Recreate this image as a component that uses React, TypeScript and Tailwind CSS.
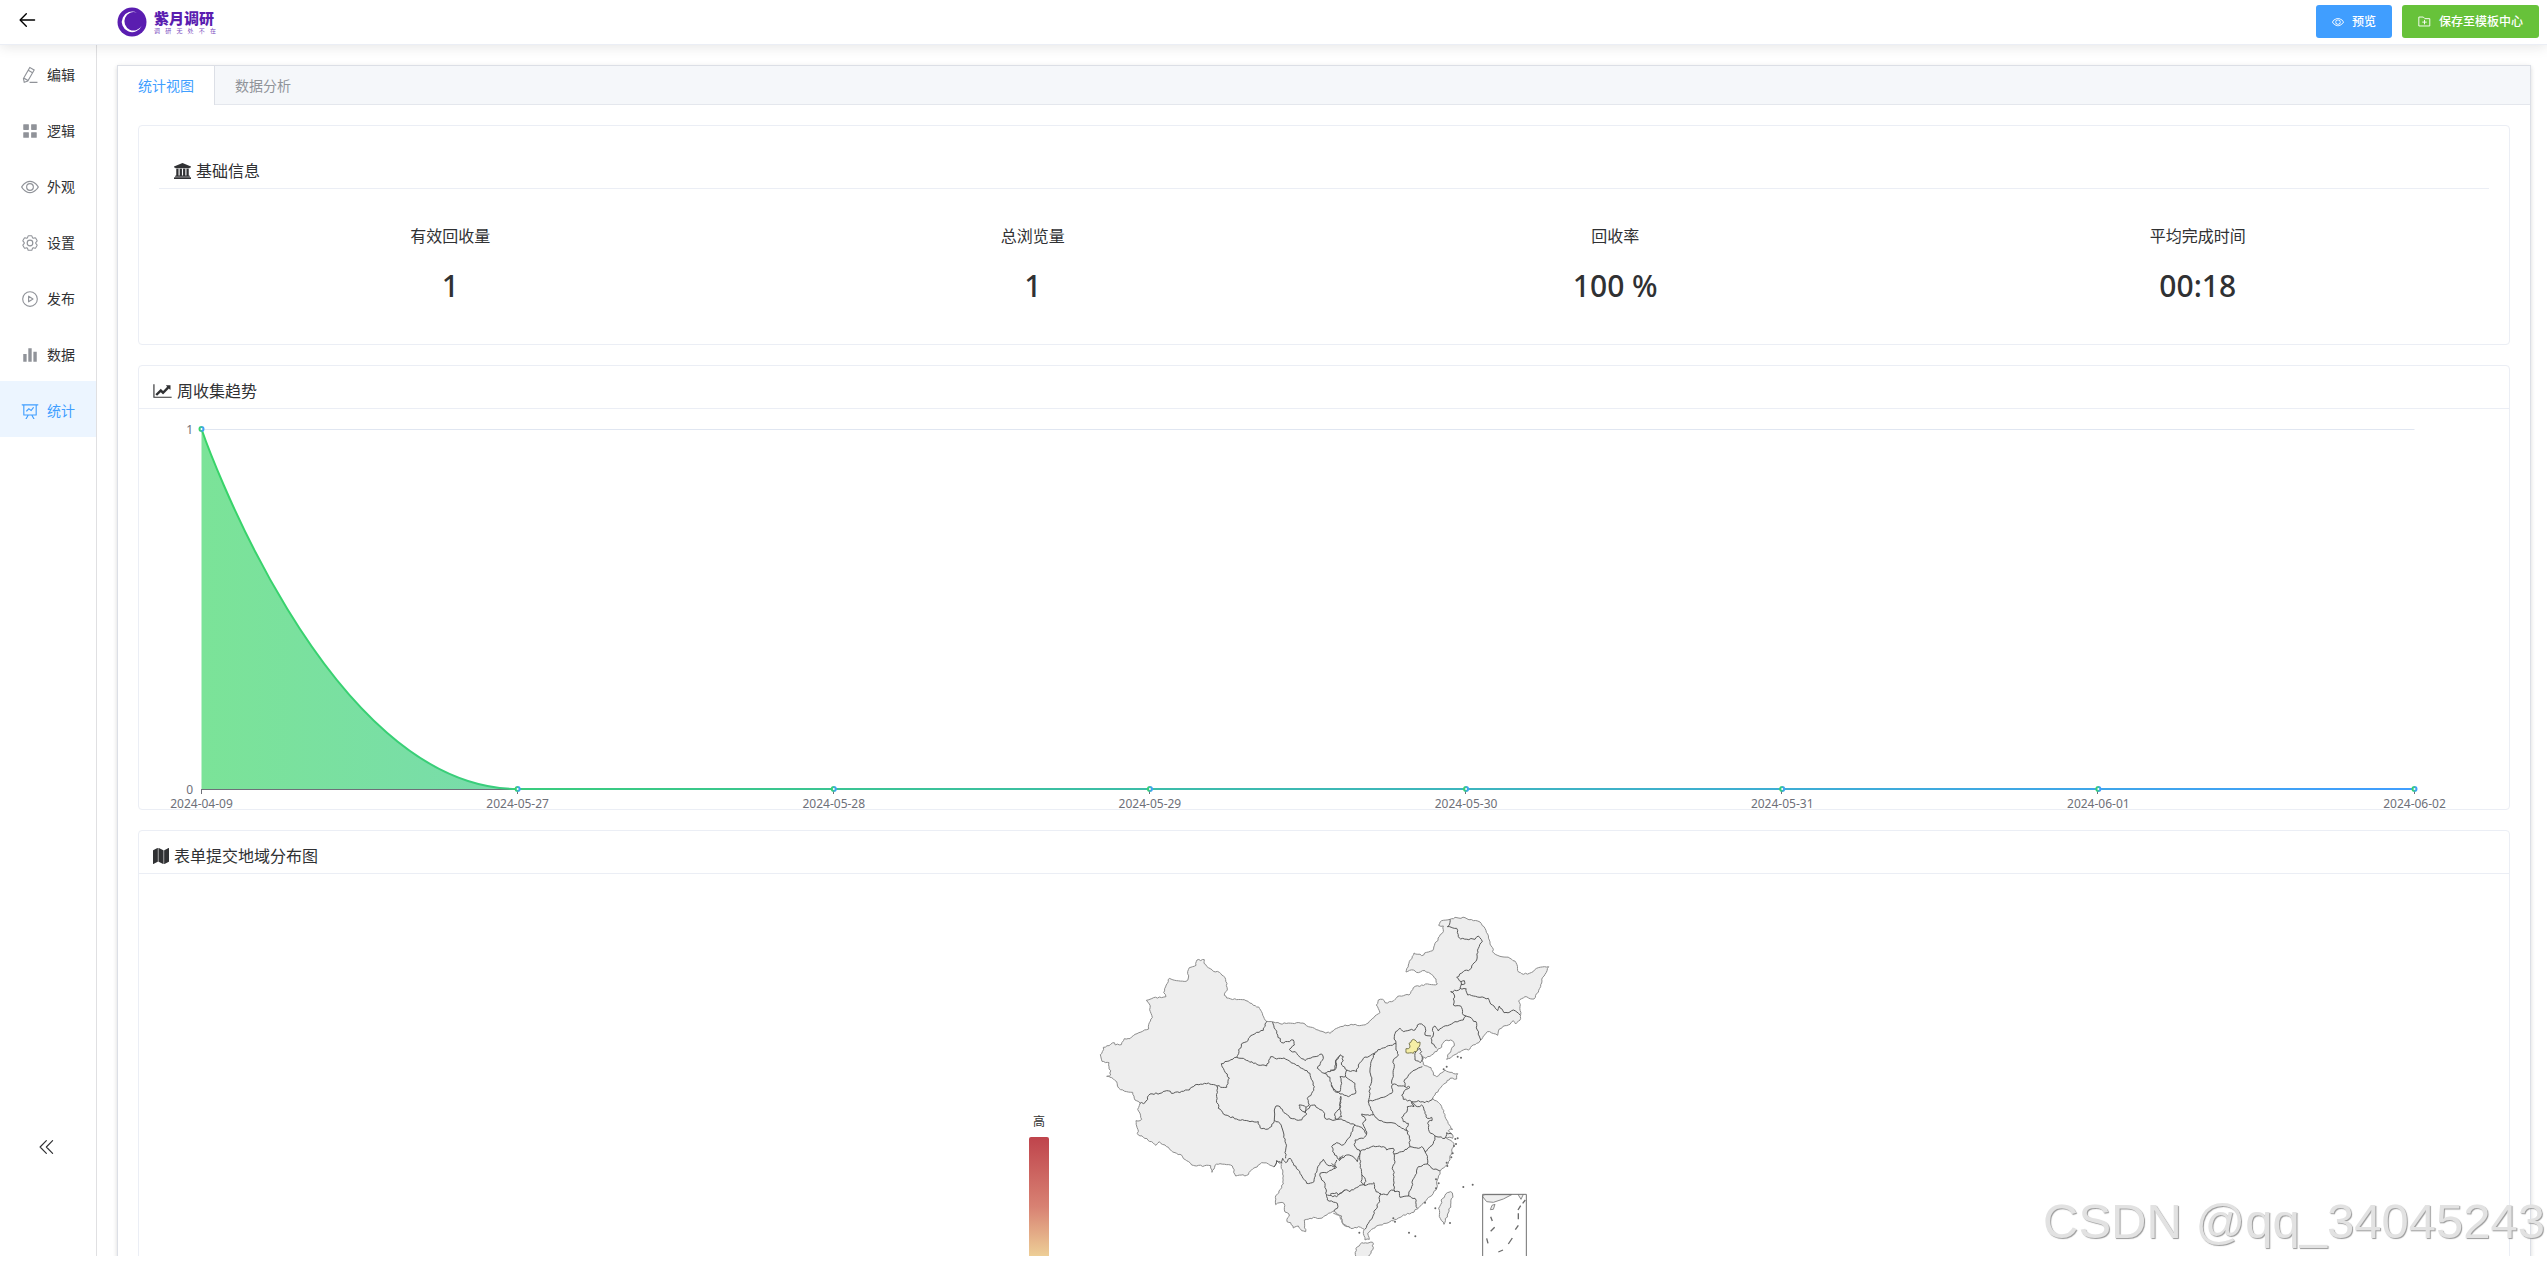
import { useState, type ReactNode } from 'react';

/* ---------- icons ---------- */

type IconProps = { className?: string };

function Glyph({ className, children, box = '0 0 1024 1024' }: IconProps & { children: ReactNode; box?: string }) {
  return (
    <svg viewBox={box} className={className} fill="currentColor" aria-hidden="true">
      {children}
    </svg>
  );
}

const BackIcon = (p: IconProps) => (
  <Glyph {...p}>
    <path d="M224 480h640a32 32 0 1 1 0 64H224a32 32 0 0 1 0-64" />
    <path d="m237.248 512 265.408 265.344a32 32 0 0 1-45.312 45.312l-288-288a32 32 0 0 1 0-45.312l288-288a32 32 0 1 1 45.312 45.312z" />
  </Glyph>
);

const PenIcon = (p: IconProps) => (
  <Glyph {...p}>
    <path d="m199.04 672.64 193.984 112 224-387.968-193.92-112-224 388.032zm-23.872 60.16 32.896 148.288 144.896-45.696zM455.04 229.248l193.92 112 56.704-98.112-193.984-112zM104.32 708.8l384-665.024 304.768 175.936L409.152 884.8h.064l-248.448 78.336zm384 254.272v-64h448v64z" />
  </Glyph>
);

const GridIcon = (p: IconProps) => (
  <Glyph {...p}>
    <rect x="128" y="128" width="320" height="320" rx="32" />
    <rect x="576" y="128" width="320" height="320" rx="32" />
    <rect x="128" y="576" width="320" height="320" rx="32" />
    <rect x="576" y="576" width="320" height="320" rx="32" />
  </Glyph>
);

const ViewIcon = (p: IconProps) => (
  <Glyph {...p}>
    <path d="M512 160c320 0 512 352 512 352S832 864 512 864 0 512 0 512s192-352 512-352m0 64c-225.28 0-384.128 208.064-436.8 288 52.608 79.872 211.456 288 436.8 288 225.28 0 384.128-208.064 436.8-288-52.608-79.872-211.456-288-436.8-288m0 64a224 224 0 1 1 0 448 224 224 0 0 1 0-448m0 64a160.192 160.192 0 0 0-160 160c0 88.192 71.744 160 160 160s160-71.808 160-160-71.744-160-160-160" />
  </Glyph>
);

const GearIcon = (p: IconProps) => (
  <Glyph {...p}>
    <g fill="none" stroke="currentColor" strokeWidth="66" strokeLinejoin="round">
      <path
        transform="translate(36 36) scale(.93)"
        d="M600.704 64a32 32 0 0 1 30.464 22.208l35.2 109.376c14.784 7.232 28.928 15.36 42.432 24.512l112.384-24.192a32 32 0 0 1 34.432 15.36L944.32 364.8a32 32 0 0 1-4.032 37.504l-77.12 85.12a357.12 357.12 0 0 1 0 49.024l77.12 85.248a32 32 0 0 1 4.032 37.504l-88.704 153.6a32 32 0 0 1-34.432 15.296L708.8 803.904c-13.44 9.088-27.648 17.28-42.368 24.512l-35.264 109.376A32 32 0 0 1 600.704 960H423.296a32 32 0 0 1-30.464-22.208L357.696 828.48a351.616 351.616 0 0 1-42.56-24.64l-112.32 24.256a32 32 0 0 1-34.432-15.36L79.68 659.2a32 32 0 0 1 4.032-37.504l77.12-85.248a357.12 357.12 0 0 1 0-48.896l-77.12-85.248A32 32 0 0 1 79.68 364.8l88.704-153.6a32 32 0 0 1 34.432-15.296l112.32 24.256c13.568-9.152 27.776-17.408 42.56-24.64l35.2-109.312A32 32 0 0 1 423.232 64H600.64z"
      />
      <circle cx="512" cy="512" r="160" />
    </g>
  </Glyph>
);

const PlayIcon = (p: IconProps) => (
  <Glyph {...p}>
    <g fill="none" stroke="currentColor" strokeWidth="64" strokeLinejoin="round">
      <circle cx="512" cy="512" r="416" />
      <path d="M432 352v320l250-160z" />
    </g>
  </Glyph>
);

const HistogramIcon = (p: IconProps) => (
  <Glyph {...p}>
    <path d="M416 896V128h192v768zm-288 0V448h192v448zm576 0V320h192v576z" />
  </Glyph>
);

const BoardIcon = (p: IconProps) => (
  <Glyph {...p}>
    <path d="M359.168 768H160a32 32 0 0 1-32-32V192H64a32 32 0 0 1 0-64h896a32 32 0 1 1 0 64h-64v544a32 32 0 0 1-32 32H665.216l110.848 192h-73.856L591.36 768H433.024L322.176 960H248.32zM832 192H192v512h640zM342.656 534.656a32 32 0 1 1-45.312-45.312L444.992 341.76l125.44 94.08L679.04 300.032a32 32 0 1 1 49.92 39.936L581.632 524.224 451.008 426.24z" />
  </Glyph>
);

const FolderAddIcon = (p: IconProps) => (
  <Glyph {...p}>
    <g fill="none" stroke="currentColor" strokeWidth="72" strokeLinejoin="round" strokeLinecap="round">
      <path d="M96 160h322l127 127h383v577H96z" />
      <path d="M512 416v288M368 560h288" />
    </g>
  </Glyph>
);

const CollapseIcon = (p: IconProps) => (
  <Glyph {...p}>
    <g fill="none" stroke="currentColor" strokeWidth="60" strokeLinejoin="round" strokeLinecap="round">
      <path d="M530 190 210 512l320 322M850 190 530 512l320 322" />
    </g>
  </Glyph>
);

const BankIcon = (p: IconProps) => (
  <Glyph {...p} box="0 0 1920 1792">
    <path d="M960 0l960 384v128h-128q0 26-20.500 45t-48.500 19h-1526q-28 0-48.500-19t-20.500-45h-128v-128zm-704 640h256v768h128v-768h256v768h128v-768h256v768h128v-768h256v768h59q28 0 48.500 19t20.500 45v64h-1664v-64q0-26 20.500-45t48.500-19h59v-768zm1595 960q28 0 48.500 19t20.500 45v128h-1920v-128q0-26 20.500-45t48.500-19h1782z" />
  </Glyph>
);

const LineChartIcon = (p: IconProps) => (
  <Glyph {...p} box="0 0 2048 1792">
    <path d="M2048 1536v128h-2048v-1536h128v1408h1920zm-128-1248v435q0 21-19.500 29.500t-35.500-7.500l-121-121-633 633q-10 10-23 10t-23-10l-233-233-416 416-192-192 585-585q10-10 23-10t23 10l233 233 464-464-121-121q-16-16-7.500-35.500t29.500-19.500h435q14 0 23 9t9 23z" />
  </Glyph>
);

const MapIcon = (p: IconProps) => (
  <Glyph {...p} box="0 0 1792 1792">
    <path d="M512 0q13 0 22.500 9.500t9.500 22.500v1472q0 20-17 28l-480 256q-7 4-15 4-13 0-22.500-9.500t-9.500-22.500v-1472q0-20 17-28l480-256q7-4 15-4zm1248 0q13 0 22.500 9.500t9.500 22.500v1472q0 20-17 28l-480 256q-7 4-15 4-13 0-22.500-9.500t-9.500-22.500v-1472q0-20 17-28l480-256q7-4 15-4zm-1120 0q8 0 14 3l512 256q18 10 18 29v1472q0 13-9.500 22.500t-22.500 9.500q-8 0-14-3l-512-256q-18-10-18-29v-1472q0-13 9.500-22.500t22.500-9.500z" />
  </Glyph>
);

/* ---------- header ---------- */

function Logo() {
  return (
    <div className="flex items-center gap-[7px]">
      <svg viewBox="0 0 30 30" className="h-[30px] w-[30px]" aria-hidden="true">
        <circle cx="15" cy="15" r="14.500" fill="#5a1db0" />
        <path d="M20 5.800A10.300 10.300 0 1 0 24.800 18.500A9.200 9.200 0 1 1 20 5.800z" fill="#fff" />
      </svg>
      <div className="flex w-[62px] flex-col pt-px">
        <span className="text-[15px] leading-[17px] font-black whitespace-nowrap text-[#5a1db0]">紫月调研</span>
        <span className="flex justify-between text-[6px] leading-[8px] text-[#7a4cc0]">
          {'调研无处不在'.split('').map((c) => (
            <span key={c}>{c}</span>
          ))}
        </span>
      </div>
    </div>
  );
}

function Header() {
  return (
    <header className="z-10 flex h-[45px] shrink-0 items-center border-b border-[#ebeef5] bg-white pr-2 pb-px shadow-[0_2px_12px_0_rgba(0,0,0,0.1)]">
      <button aria-label="返回" className="ml-4 mr-[79px] pb-[3px] text-black">
        <BackIcon className="h-[22px] w-[22px]" />
      </button>
      <Logo />
      <div className="ml-auto flex gap-[10px]">
        <button className="flex h-[33px] items-center gap-2 rounded-[3px] bg-[#409eff] px-4 text-[12px] font-medium text-white">
          <ViewIcon className="h-3 w-3" />
          预览
        </button>
        <button className="flex h-[33px] items-center gap-2 rounded-[3px] bg-[#67c23a] px-4 text-[12px] font-medium text-white">
          <FolderAddIcon className="h-[13px] w-[13px]" />
          保存至模板中心
        </button>
      </div>
    </header>
  );
}

/* ---------- sidebar ---------- */

const menu = [
  { label: '编辑', Icon: PenIcon },
  { label: '逻辑', Icon: GridIcon },
  { label: '外观', Icon: ViewIcon },
  { label: '设置', Icon: GearIcon },
  { label: '发布', Icon: PlayIcon },
  { label: '数据', Icon: HistogramIcon },
  { label: '统计', Icon: BoardIcon },
];

function Sidebar() {
  return (
    <aside className="flex w-[97px] shrink-0 flex-col border-r border-[#e0e0e2]">
      <nav>
        {menu.map(({ label, Icon }) => {
          const active = label === '统计';
          return (
            <a
              key={label}
              href="#"
              className={
                active
                  ? 'flex h-14 items-center gap-2 bg-[#ecf5ff] pt-[3px] pl-[21px] text-[14px] text-[#409eff]'
                  : 'flex h-14 items-center gap-2 pt-[3px] pl-[21px] text-[14px] text-[#303133]'
              }
            >
              <Icon className={active ? 'h-[18px] w-[18px]' : 'h-[18px] w-[18px] text-[#909399]'} />
              {label}
            </a>
          );
        })}
      </nav>
      <button aria-label="收起" className="mt-auto mb-[99px] ml-9 w-5 text-[#303133]">
        <CollapseIcon className="h-5 w-5" />
      </button>
    </aside>
  );
}

/* ---------- cards ---------- */

function Card({ children }: { children: ReactNode }) {
  return <section className="rounded-[4px] border border-[#ebeef5] bg-white">{children}</section>;
}

function CardTitle({ icon, children, className }: { icon: ReactNode; children: ReactNode; className: string }) {
  return (
    <h2 className={`flex h-[43px] items-center gap-[5px] border-b border-[#ebeef5] pt-2 text-[16px] text-[#303133] ${className}`}>
      {icon}
      {children}
    </h2>
  );
}

const stats = [
  ['有效回收量', '1'],
  ['总浏览量', '1'],
  ['回收率', '100 %'],
  ['平均完成时间', '00:18'],
];

function BasicInfo() {
  return (
    <Card>
      <div className="px-5 pt-5 pb-[38px]">
        <CardTitle className="pl-[15px]" icon={<BankIcon className="h-4 w-[17px]" />}>
          基础信息
        </CardTitle>
        <dl className="grid grid-cols-4 pt-[35px] text-center text-[#303133]">
          {stats.map(([label, value]) => (
            <div key={label}>
              <dt className="text-[16px] leading-6">{label}</dt>
              <dd className="mt-[18px] text-[30px] leading-10 font-medium">{value}</dd>
            </div>
          ))}
        </dl>
      </div>
    </Card>
  );
}

const days = ['2024-04-09', '2024-05-27', '2024-05-28', '2024-05-29', '2024-05-30', '2024-05-31', '2024-06-01', '2024-06-02'];

function TrendChart() {
  const left = 62.5;
  const right = 2275.5;
  const step = (right - left) / 7;
  const curve = `M${left} 20C${left} 20 186 380 ${left + step} 380`;
  return (
    <svg viewBox="0 0 2370 400" className="block w-full overflow-visible" role="img" aria-label="周收集趋势">
      <defs>
        <linearGradient id="line" gradientUnits="userSpaceOnUse" x1={left} x2={right} y1="0" y2="0">
          <stop offset="0" stopColor="#38d468" />
          <stop offset="1" stopColor="#409eff" />
        </linearGradient>
        <linearGradient id="dot" x1="0" x2="1" y1="0" y2="0">
          <stop offset="0" stopColor="#38d468" />
          <stop offset="1" stopColor="#409eff" />
        </linearGradient>
        <linearGradient id="area" gradientUnits="userSpaceOnUse" x1={left} x2={left + step} y1="0" y2="0">
          <stop offset="0" stopColor="#7be398" />
          <stop offset="1" stopColor="#78dcac" />
        </linearGradient>
      </defs>
      <path d={`M${left} 20.500H${right}`} stroke="#e0e6f1" />
      <path d={`${curve}H${left}z`} fill="url(#area)" />
      <path d={`M${left} 380.500H${right}`} stroke="#6e7079" />
      {days.map((d, i) => (
        <path key={d} d={`M${Math.round(left + i * step) - 0.5} 380v5`} stroke="#6e7079" />
      ))}
      <path d={`${curve}H${right}`} fill="none" stroke="url(#line)" strokeWidth="2" />
      <g fill="#fff" stroke="url(#dot)" strokeWidth="2">
        <circle cx={left} cy="20" r="2" />
        {days.slice(1).map((d, i) => (
          <circle key={d} cx={left + (i + 1) * step} cy="380" r="2" />
        ))}
      </g>
      <g fill="#6e7079" fontSize="12" textAnchor="end">
        <text x="54" y="25">1</text>
        <text x="54" y="385">0</text>
      </g>
      <g fill="#6e7079" fontSize="12" textAnchor="middle">
        {days.map((d, i) => (
          <text key={d} x={left + i * step} y="399">{d}</text>
        ))}
      </g>
    </svg>
  );
}

/* ---------- map ---------- */

/* Adds small repeatable irregularities to a polyline so that borders look surveyed. */
function rough(points: string, close = false) {
  const pts = points.split(' ').map((p) => p.split(',').map(Number));
  if (close) pts.push(pts[0]);
  const out = [`M${pts[0][0]} ${pts[0][1]}`];
  for (let i = 1; i < pts.length; i++) {
    const [ax, ay] = pts[i - 1];
    const [bx, by] = pts[i];
    const len = Math.hypot(bx - ax, by - ay) || 1;
    const n = Math.max(1, Math.round(len / 6));
    for (let k = 1; k < n; k++) {
      const s = Math.sin((ax + bx) * 12.9 + (ay + by) * 78.2 + k * (n - k) * 37.7 + k * 3.1) * 43758.5;
      const off = (s - Math.floor(s) - 0.5) * 5;
      out.push(`L${(ax + ((bx - ax) * k) / n - ((by - ay) / len) * off).toFixed(1)} ${(ay + ((by - ay) * k) / n + ((bx - ax) / len) * off).toFixed(1)}`);
    }
    out.push(`L${bx} ${by}`);
  }
  return out.join('') + (close ? 'z' : '');
}

const westCoast = [
  '560,394 553,386 547,370 536,351 520,346 498,332 470,329 440,324 433,316 442,300 441,280 430,258 418,247 400,244 385,233 372,220 373,209 351,210 348,226 328,233 323,245 325,264 318,274 290,272 268,265 262,280 251,308 258,320 238,321 199,331 208,342 213,370 217,383 208,398 206,417 160,437 150,446 133,446 124,464 106,465 103,458 70,472 67,485 61,494 66,514 87,518 92,555 80,559 95,563 110,575 116,594 140,605 158,607 165,630 180,640',
  '180,640 173,658 185,688 180,692 168,692 170,708 175,735 190,742 215,755 228,766 238,755 255,765 285,788 300,793 320,812 335,825 350,828 392,827 396,847 405,826 420,821 440,824 457,828 467,858 500,856 515,840 545,818 565,822 582,831 590,812 600,820 608,840 610,882 597,903 586,922 587,944 600,938 612,940 615,966 627,972 621,995 632,998 640,1014 655,1008 665,1022 677,1025 673,990 690,985 700,982 720,985 735,977 762,963',
];
const westSouth = '762,963 785,978 785,995 795,1008 810,1014';
const westNorth = '810,405 775,414 747,430 720,423 685,410 675,402 650,398 600,401 580,396 560,394';

const westBorders = [
  '180,640 195,638 210,612 240,610 260,602 280,610 305,604 328,600 345,585 385,579 411,588',
  '411,588 440,592 448,564 436,548 430,535 424,521 470,502',
  '470,502 484,462 500,455 512,437 530,427 550,421 555,402 560,394',
  '411,588 410,620 415,655 430,672 470,687 510,695 535,695 540,713 557,718 570,712 580,700 583,690',
  '470,502 490,505 520,520 560,528 572,500 590,507 612,504 640,520 665,535 690,550 703,590 695,610 682,625 688,645 678,652 657,645 663,660 680,672 665,690 650,690 630,684 612,668 600,650 588,648 583,660 583,690',
  '583,690 600,700 612,735 617,760 617,805',
  '578,396 590,430 605,458 640,450 643,465 628,478 650,490 675,512 705,500 725,492 730,505 712,535 733,550',
  '733,550 750,562 755,590 765,605 780,612',
  '733,550 750,545 762,540 768,510 782,495',
  '678,652 675,668 690,648 705,645 715,655 730,665 735,685 765,690 785,680 780,650 782,620',
  '582,831 590,812 605,820 608,805 617,818 630,805 640,820 660,850 680,880 702,875 712,835 730,808 742,825 765,832 770,810',
  '720,850 745,845 770,832 755,820',
  '720,850 725,870 735,880 740,915 742,930 772,940 772,955 762,963',
  '742,915 770,920 795,900',
];

const eastOutline =
  '0,425 20,415 45,405 100,405 115,399 135,378 150,368 139,345 145,330 158,328 165,338 185,335 203,319 237,315 250,293 275,285 322,282 318,267 300,250 285,242 265,248 250,240 228,246 235,225 252,189 275,197 290,187 308,182 315,160 340,125 340,108 326,106 335,92 360,88 375,82 405,83 430,92 450,96 462,110 478,150 492,190 510,199 540,205 558,218 563,242 575,251 598,250 625,233 656,230 645,253 638,262 632,290 612,327 585,320 566,333 570,350 572,385 557,402 550,392 540,403 525,407 508,417 503,436 472,425 455,448 440,460 425,468 415,480 400,480 385,487 365,500 350,508 357,490 363,482 373,462 362,450 345,452 330,475 305,495 288,505 277,500 280,524 303,533 310,555 320,560 345,540 360,547 383,551 380,567 360,565 345,580 330,595 315,615 308,625 325,637 335,650 345,680 358,705 368,718 355,722 366,732 368,745 347,742 372,760 365,780 360,810 345,830 330,845 322,870 318,900 300,920 285,935 262,957 245,968 220,975 200,988 180,995 150,1005 125,1018 113,1030 118,1048 105,1050 100,1030 103,1018 85,1010 70,1015 50,1010 38,998 30,980 10,970';

const eastBorders = [
  '360,88 360,97 352,110 380,115 385,140 392,147 435,148 445,138 457,155 445,175 440,210 425,228 420,238 400,245 380,262 393,275 390,295 408,297',
  '393,275 403,272 405,281 393,283',
  '408,295 413,315 430,318 450,322 475,325 482,342 492,348 503,362 508,348 522,368 540,366 550,360 570,375',
  '390,297 380,302 362,305 373,315 370,345 392,348 400,375 408,378',
  '408,378 400,390 375,395 340,410 325,423 315,408 308,415 310,435 303,445',
  '408,378 425,385 440,400 442,420 452,450',
  '303,445 305,460 320,474',
  '303,438 285,435 285,410 275,402 262,405 255,420 240,420 220,425 210,415 197,425 193,440 198,460',
  '198,460 198,480 205,495 190,510 193,530 190,560 185,580 188,583',
  '198,460 175,467 155,475 135,487 133,495',
  '133,490 122,520 120,540 125,570 118,590 120,610 115,635',
  '115,635 140,628 160,622 185,610 188,583',
  '188,583 215,588 225,590 222,575 240,550 255,540 277,530',
  '225,590 240,592 228,598 215,615 220,628 245,635',
  '245,635 265,632 285,638 300,632 308,625',
  '245,635 252,650 232,650 232,660 215,682 220,695 235,700 228,715 232,725',
  '130,672 145,690 165,697 195,700 215,715 235,725',
  '115,635 122,655 130,675',
  '130,675 108,675 95,672 108,690 98,700 105,715 110,732',
  '245,635 262,650 275,645 285,665 292,685 305,682 306,692 296,694 293,700 298,725 315,738',
  '315,738 345,745 350,728 365,732',
  '315,738 310,760 300,770 285,785',
  '232,725 238,745 240,770',
  '240,770 265,775 275,770 285,785',
  '240,770 215,785 192,792',
  '192,792 190,775 170,780 160,770 130,768 110,775 92,782 90,790',
  '110,732 100,745 75,750 75,770 90,785',
  '192,792 195,815 188,830 192,860 190,885 195,905',
  '285,785 292,805 292,822 265,830 260,850 248,870 245,890 235,918',
  '292,822 305,835 330,843',
  '235,918 210,922 208,905 195,905 185,900 172,915 150,910',
  '235,918 255,925 262,955',
  '152,912 145,940 135,960 130,975 115,1000 105,1018',
  '150,912 138,905 132,878 110,885 95,885',
  '90,790 90,820 95,850 93,875 103,885 106,868 96,855',
  '95,885 75,895 60,905 45,900 25,915 20,908',
  '20,908 0,913',
  '133,490 100,505 85,525 80,545 50,540',
  '10,541 18,535 18,510 32,495 40,500 35,525 50,540 47,560 30,560 35,580 30,605 20,605 5,585',
  '0,541 10,541',
  '47,560 75,580 77,610 55,620 30,612',
  '32,618 32,650 15,670 15,685 45,692 75,705',
  '75,705 95,712 110,732',
  '75,705 60,740 40,765 20,758 5,770 8,785 25,808 40,797',
  '30,800 28,812 50,795 70,800 82,815 90,790',
  '262,480 270,475 275,485 270,490 277,503 270,518 255,510 255,490 262,480',
];

const islets = '400,891 428,884 316,955 360,999 237,1028 256,1039 88,1028 376,747 383,745 372,768 378,762 368,790 364,802 350,818 352,828 318,868 326,880 318,895 190,985 195,995 383,500 393,503 350,530 341,538 285,938'
  .split(' ')
  .map((p) => p.split(','));

function RegionMap() {
  return (
    <svg viewBox="1024 874 600 500" className="mx-auto block h-[500px] w-[600px]" role="img" aria-label="表单提交地域分布图">
      <defs>
        <linearGradient id="heat" x1="0" x2="0" y1="0" y2="1">
          <stop offset="0" stopColor="#bf444c" />
          <stop offset=".5" stopColor="#d88273" />
          <stop offset="1" stopColor="#f6efa6" />
        </linearGradient>
      </defs>
      <text x="1039" y="1126" fontSize="12" textAnchor="middle" fill="#333">高</text>
      <rect x="1029" y="1137" width="20" height="140" rx="2" fill="url(#heat)" />

      <g transform="translate(1080 890) scale(.33333)" fill="#eee" stroke="none">
        <path d={rough(`${westCoast[0]} ${westCoast[1]} ${westSouth} ${westNorth}`, true)} />
      </g>
      <g transform="translate(1330 890) scale(.33333)" fill="#eee" stroke="none">
        <path d={rough(eastOutline)} />
      </g>

      <g transform="translate(1080 890) scale(.33333)" fill="none" strokeWidth="3" strokeLinejoin="round">
        <g stroke="#8c8c8c">
          {westCoast.map((p) => <path key={p} d={rough(p)} />)}
          <path d={rough(westSouth)} />
          <path d={rough('750,430 720,423 685,410 675,402 650,398 600,401 580,396 560,394')} />
        </g>
        <g stroke="#585858">{westBorders.map((p) => <path key={p} d={rough(p)} />)}</g>
      </g>
      <g transform="translate(1330 890) scale(.33333)" fill="none" strokeWidth="3" strokeLinejoin="round">
        <path d={rough(`0,430 ${eastOutline.slice(6)}`)} stroke="#8c8c8c" />
        <g stroke="#585858">{eastBorders.map((p) => <path key={p} d={rough(p)} />)}</g>
        <path d={rough('228,476 240,472 237,460 250,448 262,458 270,456 268,470 262,480 250,490 228,488', true)} fill="#f6efa6" stroke="#7a7850" />
        <g fill="#eee" stroke="#8a8a8a">
          <path d={rough('352,908 362,905 368,915 362,945 352,975 342,1003 328,980 326,955 338,925', true)} />
          <path d={rough('78,1075 95,1058 128,1057 130,1072 118,1095 105,1120 85,1120 78,1100', true)} />
          <path d="M458 920L464 914H545L520 927L490 937L470 935Z" />
          <path d="M564 913L573 928L580 913" />
          <path d="M486 946L495 943L490 958L481 959Z" />
        </g>
        <rect x="458" y="913" width="131" height="220" stroke="#6f6f6f" />
        <path
          d="M482 980L487 993M482 1024L494 1012M470 1045L474 1060M505 1086L519 1080M535 1062L547 1044M556 1019L565 1006M565 988V970M564 960L572 947M578 940L586 930"
          stroke="#6b6b6b"
          strokeWidth="4"
        />
        <g fill="#666">
          {islets.map(([x, y]) => <circle key={`${x}-${y}`} cx={x} cy={y} r="3" />)}
        </g>
      </g>
    </svg>
  );
}

/* ---------- page ---------- */

export default function App() {
  const [tab, setTab] = useState(0);
  return (
    <div className="relative flex h-screen flex-col overflow-hidden bg-white pb-[5px] font-['Noto_Sans','Noto_Sans_CJK_SC',sans-serif]">
      <Header />
      <div className="flex min-h-0 flex-1">
        <Sidebar />
        <main className="min-w-0 flex-1 overflow-hidden pt-5 pr-4 pl-5">
          <div className="border border-[#dcdfe6] bg-white shadow-[0_2px_4px_0_rgba(0,0,0,0.12),0_0_6px_0_rgba(0,0,0,0.04)]">
            <div role="tablist" className="flex h-[39px] border-b border-[#e4e7ed] bg-[#f5f7fa] text-[14px]">
              {['统计视图', '数据分析'].map((name, i) => (
                <button
                  key={name}
                  role="tab"
                  aria-selected={tab === i}
                  onClick={() => setTab(i)}
                  className={
                    tab === i
                      ? '-mb-px border-r border-[#dcdfe6] bg-white px-5 text-[#409eff]'
                      : 'px-5 text-[#909399]'
                  }
                >
                  {name}
                </button>
              ))}
            </div>
            <div className="flex flex-col gap-5 p-5">
              <BasicInfo />
              <Card>
                <CardTitle className="pl-[14px]" icon={<LineChartIcon className="h-4 w-[19px]" />}>
                  周收集趋势
                </CardTitle>
                <TrendChart />
              </Card>
              <Card>
                <CardTitle className="pl-[14px]" icon={<MapIcon className="h-4 w-4" />}>
                  表单提交地域分布图
                </CardTitle>
                <RegionMap />
              </Card>
            </div>
          </div>
        </main>
      </div>
      <p className="pointer-events-none absolute right-[2px] bottom-3 z-20 font-['Liberation_Sans',sans-serif] text-[49px] leading-[56px] text-[#e2e2e2] [text-shadow:1px_1px_1px_#999]">
        CSDN @qq_34045243
      </p>
    </div>
  );
}
